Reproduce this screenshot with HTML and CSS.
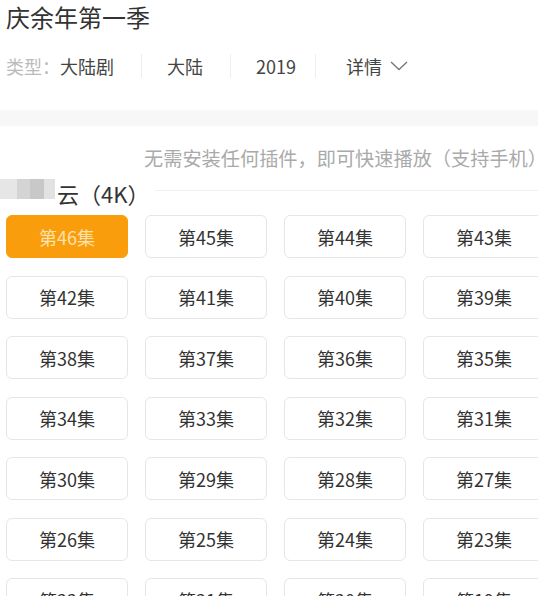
FILE: index.html
```html
<!DOCTYPE html>
<html lang="zh-CN">
<head>
  <meta charset="UTF-8">
  <title>庆余年第一季</title>
  <meta name="viewport" content="width=device-width, initial-scale=1.0">
  <link rel="stylesheet" href="styles.css">
</head>
<body>
  <div class="video-info">
    <h1 class="video-title">庆余年第一季</h1>
    <div class="video-meta">
      <span class="video-meta-item"><span class="video-meta-label">类型：</span>大陆剧</span>
      <span class="video-meta-sep"></span>
      <span class="video-meta-item">大陆</span>
      <span class="video-meta-sep"></span>
      <span class="video-meta-item">2019</span>
      <span class="video-meta-sep video-meta-sep-short"></span>
      <span class="video-meta-item">详情
        <svg class="video-meta-arrow" width="18" height="10" viewBox="0 0 18 10"><polyline points="1,1 9,8.5 17,1" fill="none" stroke="#777" stroke-width="1.3"/></svg>
      </span>
    </div>
  </div>

  <div class="video-divider"></div>

  <div class="play-source">
    <p class="play-source-note">无需安装任何插件，即可快速播放（支持手机）</p>
    <div class="play-source-head">
      <h2 class="play-source-title"><span class="play-source-blur"></span>云（4K）</h2>
      <span class="play-source-line"></span>
    </div>
    <div class="episode-list">
      <a class="episode-button episode-button-active">第46集</a>
      <a class="episode-button">第45集</a>
      <a class="episode-button">第44集</a>
      <a class="episode-button">第43集</a>
      <a class="episode-button">第42集</a>
      <a class="episode-button">第41集</a>
      <a class="episode-button">第40集</a>
      <a class="episode-button">第39集</a>
      <a class="episode-button">第38集</a>
      <a class="episode-button">第37集</a>
      <a class="episode-button">第36集</a>
      <a class="episode-button">第35集</a>
      <a class="episode-button">第34集</a>
      <a class="episode-button">第33集</a>
      <a class="episode-button">第32集</a>
      <a class="episode-button">第31集</a>
      <a class="episode-button">第30集</a>
      <a class="episode-button">第29集</a>
      <a class="episode-button">第28集</a>
      <a class="episode-button">第27集</a>
      <a class="episode-button">第26集</a>
      <a class="episode-button">第25集</a>
      <a class="episode-button">第24集</a>
      <a class="episode-button">第23集</a>
      <a class="episode-button">第22集</a>
      <a class="episode-button">第21集</a>
      <a class="episode-button">第20集</a>
      <a class="episode-button">第19集</a>
    </div>
  </div>
</body>
</html>
```

FILE: styles.css
```css
body {
  font-family: 'Noto Sans CJK SC', 'Noto Sans', sans-serif;
  background: #fff;
  margin: 0;
  padding: 0;
  width: 538px;
  height: 596px;
  overflow: hidden;
}
.video-info {
  padding: 0 6px;
}
.video-title {
  margin: 0;
  padding-top: 1px;
  font-size: 24px;
  line-height: 32px;
  font-weight: normal;
  color: #333;
}
.video-meta {
  display: flex;
  align-items: center;
  margin-top: 21px;
  height: 24px;
  font-size: 18px;
  line-height: 24px;
  color: #444;
}
.video-meta-label {
  color: #bbb;
}
.video-meta-item {
  display: flex;
  align-items: center;
  white-space: nowrap;
}
.video-meta-sep {
  width: 1px;
  height: 24px;
  background: #eee;
  margin: 0 25px 0 27px;
}
.video-meta-sep-short {
  margin: 0 30px 0 19px;
}
.video-meta-arrow {
  margin-left: 8px;
}
.video-divider {
  height: 16px;
  background: #f7f7f7;
  margin-top: 32px;
}
.play-source-note {
  margin: 19px -9px 0 0;
  font-size: 19.2px;
  line-height: 26px;
  color: #aaa;
  text-align: right;
  white-space: nowrap;
}
.play-source-head {
  display: flex;
  align-items: center;
  margin-top: 9px;
  height: 26px;
}
.play-source-title {
  margin: 0;
  font-size: 22px;
  line-height: 26px;
  font-weight: normal;
  color: #333;
  display: flex;
  align-items: center;
  white-space: nowrap;
}
.play-source-blur {
  display: inline-block;
  width: 55px;
  height: 20px;
  margin-top: -8px;
  margin-right: 2px;
  background: linear-gradient(90deg, #e6e6e6 0 30%, #d4d4d4 30% 55%, #c8c8c8 55% 80%, #e2e2e2 80%);
}
.play-source-line {
  flex: 1;
  height: 1px;
  background: #f0f0f0;
  margin: -6px 0 0 6px;
}
.episode-list {
  display: grid;
  grid-template-columns: repeat(4, 122px);
  column-gap: 17px;
  row-gap: 17.5px;
  margin-top: 9px;
  padding-left: 6px;
}
.episode-button {
  display: flex;
  align-items: center;
  justify-content: center;
  height: 43px;
  box-sizing: border-box;
  border: 1px solid #e6e6e6;
  border-radius: 6px;
  font-size: 18px;
  color: #333;
  cursor: pointer;
}
.episode-button-active {
  background: #fa9d0c;
  border-color: #fa9d0c;
  color: #fde2ae;
}
```
